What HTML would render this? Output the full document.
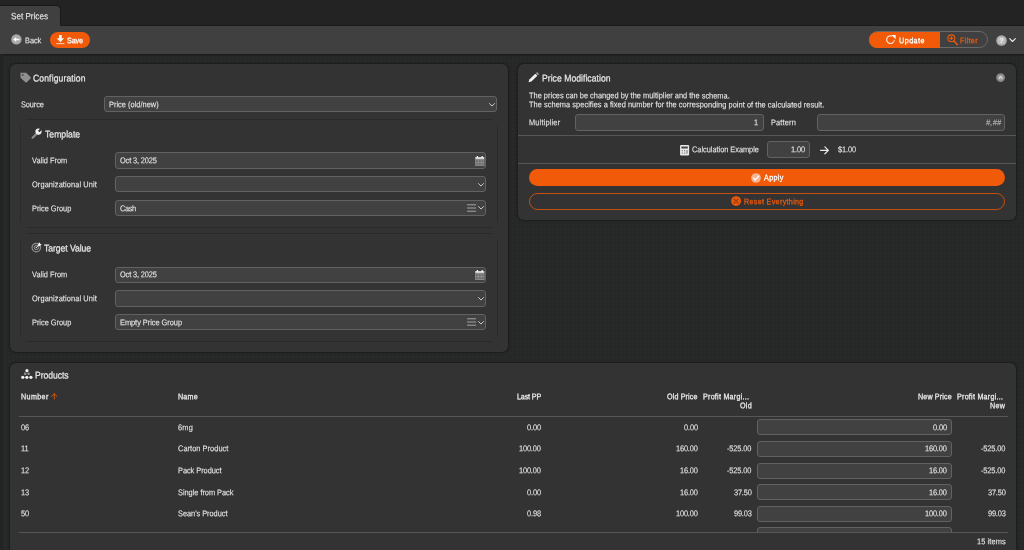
<!DOCTYPE html>
<html><head><meta charset="utf-8"><title>Set Prices</title>
<style>
html,body{margin:0;padding:0;background:#262727;font-family:"Liberation Sans",sans-serif;}
body{width:1024px;height:550px;overflow:hidden;font-family:"Liberation Sans",sans-serif;}
#root{filter:blur(0.3px);position:relative;width:1024px;height:550px;overflow:hidden;background-color:#262828;background-image:radial-gradient(circle at 1px 1px,#2c2e2e 0.5px,rgba(44,46,46,0) 0.85px);background-size:4px 4px;}
#root *{box-sizing:border-box;}
.a{position:absolute;}
.t{transform:scaleY(1.13) rotate(0.03deg);text-rendering:geometricPrecision;position:absolute;white-space:pre;line-height:12px;height:12px;font-family:"Liberation Sans",sans-serif;}
.topbar{left:0;top:0;width:1024px;height:26px;background:#232323;}
.tab{left:-1px;top:5.4px;width:61.8px;height:21px;background:#404040;border:1px solid #191919;border-bottom:none;border-radius:0 5px 0 0;}
.toolbar{left:0;top:26px;width:1024px;height:27.5px;background:#404040;box-shadow:0 1px 2px rgba(0,0,0,.45);}
.panel{background:#333333;border-radius:6px;box-shadow:0 0 2px 1px rgba(0,0,0,.35);}
.inp{background:#414141;border:1px solid #626262;border-radius:3px;}
.hl{height:1px;background:#2a2a2a;}
.vl{width:1px;background:#2a2a2a;}
.ll{height:1px;background:#565656;}
.pill{border-radius:9px;}
svg{position:absolute;overflow:visible;}

</style></head>
<body>
<div id="root">
<div class="a topbar"></div>
<div class="a tab"></div>
<div class="a toolbar"></div>
<div class="a" style="left:60px;top:25.3px;width:964px;height:1px;background:#1b1b1b;"></div>

<div class="a leftstrip" style="left:0;top:54px;width:2.5px;height:496px;background:#222323;"></div>
<!-- toolbar buttons -->
<div class="a pill" style="left:49.7px;top:31.5px;width:40px;height:16.5px;background:#f05a08;"></div>
<div class="a" style="left:868.8px;top:31.4px;width:119px;height:16.700px;border-radius:9px;border:1px solid #6a6a6a;"></div>
<div class="a" style="left:868.8px;top:31.700px;width:71.2px;height:16.400px;border-radius:9px 0 0 9px;background:#f05a08;"></div>

<!-- panels -->
<div class="a panel" style="left:10px;top:63.5px;width:498px;height:288.4px;"></div>
<div class="a panel" style="left:518px;top:63.5px;width:498px;height:156.4px;"></div>
<div class="a panel" style="left:10px;top:362.7px;width:1006px;height:200px;"></div>

<!-- left panel lines -->
<div class="a hl" style="left:26px;top:119px;width:466px;"></div>
<div class="a hl" style="left:26px;top:227px;width:466px;"></div>
<div class="a hl" style="left:26px;top:233px;width:466px;"></div>
<div class="a hl" style="left:26px;top:341px;width:466px;"></div>
<div class="a vl" style="left:20px;top:125.5px;height:96px;"></div>
<div class="a vl" style="left:497px;top:125.5px;height:96px;"></div>
<div class="a vl" style="left:20px;top:239.5px;height:96.5px;"></div>
<div class="a vl" style="left:497px;top:239.5px;height:96.5px;"></div>

<!-- left panel inputs -->
<div class="a inp" style="left:104.2px;top:96.2px;width:392.8px;height:16.3px;"></div>
<div class="a inp" style="left:115.2px;top:152.4px;width:370.9px;height:16.2px;"></div>
<div class="a inp" style="left:115.2px;top:176.3px;width:370.9px;height:16.2px;"></div>
<div class="a inp" style="left:115.2px;top:200.1px;width:370.9px;height:16.2px;"></div>
<div class="a inp" style="left:115.2px;top:266.5px;width:370.9px;height:16.2px;"></div>
<div class="a inp" style="left:115.2px;top:290.4px;width:370.9px;height:16.2px;"></div>
<div class="a inp" style="left:115.2px;top:314.2px;width:370.9px;height:16.2px;"></div>

<!-- right panel -->
<div class="a inp" style="left:575.1px;top:114.2px;width:188.5px;height:16.6px;"></div>
<div class="a inp" style="left:816.9px;top:114.2px;width:188.6px;height:16.6px;"></div>
<div class="a ll" style="left:518px;top:135.4px;width:498px;"></div>
<div class="a ll" style="left:518px;top:162.6px;width:498px;"></div>
<div class="a inp" style="left:767px;top:141.4px;width:43.4px;height:16.9px;"></div>
<div class="a pill" style="left:529.3px;top:169.2px;width:476.1px;height:16.4px;background:#f05a08;"></div>
<div class="a pill" style="left:529.3px;top:193.3px;width:476.1px;height:16.6px;border:1px solid #c55011;"></div>

<!-- products lines & inputs -->
<div class="a ll" style="left:18.5px;top:415.9px;width:989px;"></div>
<div class="a" style="left:18.5px;top:417px;width:989px;height:115.3px;overflow:hidden;">
  <div class="a inp" style="left:738.8px;top:2.2px;width:194.9px;height:16.3px;"></div>
  <div class="a inp" style="left:738.8px;top:23.85px;width:194.9px;height:16.3px;"></div>
  <div class="a inp" style="left:738.8px;top:45.5px;width:194.9px;height:16.3px;"></div>
  <div class="a inp" style="left:738.8px;top:67.15px;width:194.9px;height:16.3px;"></div>
  <div class="a inp" style="left:738.8px;top:88.8px;width:194.9px;height:16.3px;"></div>
  <div class="a inp" style="left:738.8px;top:110.45px;width:194.9px;height:16.3px;"></div>
</div>
<div class="a ll" style="left:18.5px;top:532.2px;width:989px;"></div>

<!-- ===== icons ===== -->
<!-- back -->
<svg style="left:10.8px;top:34.2px" width="10.8" height="10.8" viewBox="0 0 20 20"><circle cx="10" cy="10" r="9.6" fill="#a9a9a9"/><path d="M15.5 8.6H9.6V5.4L4 10l5.6 4.6v-3.2h5.9z" fill="#fff"/></svg>
<!-- save -->
<svg style="left:55.6px;top:34.8px" width="8.800" height="9.600" viewBox="0 0 18 20"><path d="M6.200 0h5.600v6.800h5L9 15 1.200 6.800h5z" fill="#f4f8fb"/><rect x="0.500" y="17.200" width="17" height="1.800" fill="#fff" opacity=".85"/></svg>
<!-- update -->
<svg style="left:885.4px;top:34.4px" width="11" height="11" viewBox="0 0 22 22"><path d="M13.2 4.1A7.6 7.6 0 1 0 18.4 13" fill="none" stroke="#fff" stroke-width="2.300" stroke-linecap="round" opacity=".85"/><path d="M13 2.2h8.2v8.2z" fill="#fff"/></svg>
<!-- filter -->
<svg style="left:947.2px;top:34px" width="11.2" height="11.6" viewBox="0 0 22 23"><circle cx="8.6" cy="8.6" r="6.9" fill="none" stroke="#e8590c" stroke-width="2.2"/><path d="M8.6 4.8v7.6M4.8 8.6h7.6" stroke="#e8590c" stroke-width="2.2"/><path d="M13.6 13.8l7 7.4" stroke="#e8590c" stroke-width="3.2" stroke-linecap="round"/></svg>
<!-- help -->
<svg style="left:995.8px;top:34.500px" width="11" height="11" viewBox="0 0 22 22"><circle cx="11" cy="11" r="10.600" fill="#ababab"/><circle cx="11" cy="11" r="7.600" fill="#bdbdbd"/><text x="11" y="16.400" font-family="Liberation Sans, sans-serif" font-weight="700" font-size="14.500" text-anchor="middle" fill="#f6f6f6">?</text></svg>
<svg style="left:1009.4px;top:37.6px" width="7" height="4.4" viewBox="0 0 14 9"><path d="M1.2 1.4L7 7.2l5.8-5.8" fill="none" stroke="#eaeaea" stroke-width="2.3" stroke-linecap="round" stroke-linejoin="round"/></svg>

<!-- tags (Configuration) -->
<svg style="left:20.4px;top:71.6px" width="11" height="11" viewBox="0 0 22 22"><path d="M1 1.6h10.2c.9 0 1.6.3 2.2.9l7.6 7.6c.8.8.8 2 0 2.8l-7.4 7.4c-.8.8-2 .8-2.800 0L2 12.600C1.400 12 1 11.300 1 10.400z" fill="#8f8f8f"/><circle cx="5.600" cy="6" r="1.700" fill="#333"/></svg>
<!-- wrench (Template) -->
<svg style="left:31.4px;top:127.6px" width="11" height="11" viewBox="0 0 22 22"><path d="M3.2 19.400L11.400 11.200" stroke="#8c8c8c" stroke-width="4.400" stroke-linecap="round"/><circle cx="15" cy="7.200" r="6.200" fill="#f2f2f2"/><path d="M14 5.400L20.700 -1.300l3 3L17 8.400z" fill="#333"/></svg>
<!-- target (Target Value) -->
<svg style="left:31.2px;top:242.4px" width="11" height="11" viewBox="0 0 22 22"><circle cx="10.600" cy="11" r="8.500" fill="none" stroke="#8e8e8e" stroke-width="2.500"/><circle cx="10.600" cy="11" r="4.300" fill="none" stroke="#9a9a9a" stroke-width="2"/><circle cx="10.600" cy="11" r="1.500" fill="#d8d8d8"/><path d="M10.800 10.800L15.600 6" stroke="#f2f2f2" stroke-width="1.800"/><path d="M13.600 5.200l4.200-4.600.6 3.200 3.200.6-4.600 4.200-2.800-.600z" fill="#f6f6f6"/></svg>

<!-- chevrons & field icons : source -->
<svg style="left:488.6px;top:102.5px" width="6" height="3.600" viewBox="0 0 12 7"><path d="M1 1l5 5 5-5" fill="none" stroke="#d2d2d2" stroke-width="1.900" stroke-linecap="round" stroke-linejoin="round"/></svg>
<!-- fieldset icons dy=0 -->
<svg style="left:474.6px;top:155.9px" width="9.6" height="10" viewBox="0 0 19 20"><rect x="0.5" y="2" width="18" height="5" fill="#d2d2d2"/><rect x="3.4" y="0" width="2.6" height="4" fill="#f4f4f4"/><rect x="13" y="0" width="2.600" height="4" fill="#f4f4f4"/><rect x="0.5" y="7" width="18" height="12.500" fill="#6b6b6b"/><path d="M0.5 7.500h18M0.500 13.200h18M0.500 19h18M1 7v12.500M6.600 7v12.500M12.400 7v12.500M18 7v12.500" stroke="#9c9c9c" stroke-width="1.200" fill="none"/></svg>
<svg style="left:478px;top:182.6px" width="6" height="3.600" viewBox="0 0 12 7"><path d="M1 1l5 5 5-5" fill="none" stroke="#d2d2d2" stroke-width="1.900" stroke-linecap="round" stroke-linejoin="round"/></svg>
<svg style="left:466.8px;top:203.500px" width="9.200" height="8" viewBox="0 0 18 16"><path d="M0 1.600h18M0 8h18M0 14.400h18" stroke="#c6c6c6" stroke-width="1.500" fill="none"/></svg>
<svg style="left:478px;top:206.4px" width="6" height="3.600" viewBox="0 0 12 7"><path d="M1 1l5 5 5-5" fill="none" stroke="#d2d2d2" stroke-width="1.900" stroke-linecap="round" stroke-linejoin="round"/></svg>
<!-- fieldset icons dy=114.1 -->
<svg style="left:474.6px;top:270.0px" width="9.6" height="10" viewBox="0 0 19 20"><rect x="0.5" y="2" width="18" height="5" fill="#d2d2d2"/><rect x="3.4" y="0" width="2.6" height="4" fill="#f4f4f4"/><rect x="13" y="0" width="2.600" height="4" fill="#f4f4f4"/><rect x="0.5" y="7" width="18" height="12.500" fill="#6b6b6b"/><path d="M0.5 7.500h18M0.500 13.200h18M0.500 19h18M1 7v12.500M6.600 7v12.500M12.400 7v12.500M18 7v12.500" stroke="#9c9c9c" stroke-width="1.200" fill="none"/></svg>
<svg style="left:478px;top:296.7px" width="6" height="3.600" viewBox="0 0 12 7"><path d="M1 1l5 5 5-5" fill="none" stroke="#d2d2d2" stroke-width="1.900" stroke-linecap="round" stroke-linejoin="round"/></svg>
<svg style="left:466.8px;top:317.600px" width="9.200" height="8" viewBox="0 0 18 16"><path d="M0 1.600h18M0 8h18M0 14.400h18" stroke="#c6c6c6" stroke-width="1.500" fill="none"/></svg>
<svg style="left:478px;top:320.5px" width="6" height="3.600" viewBox="0 0 12 7"><path d="M1 1l5 5 5-5" fill="none" stroke="#d2d2d2" stroke-width="1.900" stroke-linecap="round" stroke-linejoin="round"/></svg>

<!-- pencil (Price Modification) -->
<svg style="left:528.4px;top:72px" width="11.400" height="10.800" viewBox="0 0 23 22"><path d="M1 21l1.600-5.800L14.800 3.400l4.200 4.200L6.800 19.400z" fill="#f0f0f0"/><path d="M15.800 2.400l1.600-1.600c.6-.6 1.500-.6 2.100 0l2.100 2.100c.6.600.600 1.500 0 2.100L20 6.600z" fill="#9c9c9c"/></svg>
<!-- collapse -->
<svg style="left:996px;top:72.700px" width="9.200" height="9.200" viewBox="0 0 20 20"><circle cx="10" cy="10" r="9.700" fill="#858585"/><circle cx="10" cy="10" r="6.400" fill="#9d9d9d"/><path d="M6.600 11.400l3.400-3.400 3.400 3.400" fill="none" stroke="#ececec" stroke-width="2.200" stroke-linecap="round" stroke-linejoin="round"/></svg>
<!-- calculator -->
<svg style="left:680.4px;top:144.600px" width="9.200" height="10.600" viewBox="0 0 18 21"><rect x="0" y="0" width="18" height="21" rx="2" fill="#e9e9e9"/><rect x="2.600" y="3" width="12.800" height="4" fill="#4a4a4a"/><rect x="3.200" y="10.200" width="2.200" height="2.200" fill="#777"/><rect x="7.900" y="10.200" width="2.200" height="2.200" fill="#777"/><rect x="3.200" y="15" width="2.200" height="2.200" fill="#777"/><rect x="7.900" y="15" width="2.200" height="2.200" fill="#777"/><rect x="12.600" y="10.200" width="2.200" height="7" fill="#777"/></svg>
<!-- arrow -->
<svg style="left:819.800px;top:146px" width="9.200" height="8.600" viewBox="0 0 18 17"><path d="M1 8.500h15M9.600 1.600l6.900 6.900-6.900 6.900" fill="none" stroke="#ececec" stroke-width="2.300" stroke-linecap="round" stroke-linejoin="round"/></svg>
<!-- apply check -->
<svg style="left:750.800px;top:172.800px" width="10" height="10" viewBox="0 0 20 20"><circle cx="10" cy="10" r="9.700" fill="#f9b48f"/><path d="M5 10.200l3.600 3.600 6.600-7.200" fill="none" stroke="#fff" stroke-width="2.700" stroke-linecap="round" stroke-linejoin="round"/></svg>
<!-- reset -->
<svg style="left:731.400px;top:196.400px" width="10.200" height="10.200" viewBox="0 0 20 20"><circle cx="10" cy="10" r="9.700" fill="#e8590c"/><path d="M6.300 6.300l7.400 7.400M13.700 6.300l-7.400 7.400" stroke="#a23c08" stroke-width="2.600" stroke-linecap="round"/></svg>
<!-- products icon -->
<svg style="left:20.800px;top:369.200px" width="11.600" height="10.400" viewBox="0 0 23 21"><circle cx="11.800" cy="3.400" r="3.200" fill="#f2f2f2"/><circle cx="8.200" cy="9.800" r="2.500" fill="#9a9a9a"/><circle cx="15.200" cy="9.800" r="2.500" fill="#9a9a9a"/><circle cx="3.400" cy="16.800" r="3.300" fill="#f2f2f2"/><circle cx="11.600" cy="16.800" r="3.300" fill="#f2f2f2"/><circle cx="19.800" cy="16.800" r="3.300" fill="#f2f2f2"/></svg>
<!-- sort arrow -->
<svg style="left:50.800px;top:393.400px" width="6.600" height="6.400" viewBox="0 0 13 13"><path d="M6.500 12.500V1.600M1.200 6.600l5.300-5.200 5.300 5.200" fill="none" stroke="#d9560f" stroke-width="2" stroke-linecap="round" stroke-linejoin="round"/></svg>

<span class="t" style="top:11.19px;font-size:8.10px;color:#ececec;transform-origin:0 5.89px;letter-spacing:0.009px;-webkit-text-stroke:0.1px #ececec;left:10.70px;">Set Prices</span>
<span class="t" style="top:34.64px;font-size:7.40px;color:#e8e8e8;transform-origin:0 5.90px;letter-spacing:-0.038px;-webkit-text-stroke:0.1px #e8e8e8;left:24.50px;">Back</span>
<span class="t" style="top:34.72px;font-size:7.15px;color:#ffffff;transform-origin:0 5.90px;letter-spacing:-0.099px;-webkit-text-stroke:0.27px #ffffff;left:66.60px;">Save</span>
<span class="t" style="top:34.92px;font-size:7.15px;color:#ffffff;transform-origin:0 5.90px;letter-spacing:0.507px;-webkit-text-stroke:0.27px #ffffff;left:898.60px;">Update</span>
<span class="t" style="top:34.92px;font-size:7.15px;color:#e8590c;transform-origin:0 5.90px;letter-spacing:0.335px;-webkit-text-stroke:0.27px #e8590c;left:960.30px;">Filter</span>
<span class="t" style="top:72.22px;font-size:8.60px;color:#eaeaea;transform-origin:0 5.88px;letter-spacing:0.119px;-webkit-text-stroke:0.2px #eaeaea;left:33.30px;">Configuration</span>
<span class="t" style="top:98.54px;font-size:7.40px;color:#e6e6e6;transform-origin:0 5.90px;letter-spacing:-0.108px;-webkit-text-stroke:0.1px #e6e6e6;left:20.90px;">Source</span>
<span class="t" style="top:98.54px;font-size:7.40px;color:#e6e6e6;transform-origin:0 5.90px;letter-spacing:0.023px;-webkit-text-stroke:0.1px #e6e6e6;left:109.20px;">Price (old/new)</span>
<span class="t" style="top:128.02px;font-size:8.60px;color:#eaeaea;transform-origin:0 5.88px;letter-spacing:0.038px;-webkit-text-stroke:0.2px #eaeaea;left:44.60px;">Template</span>
<span class="t" style="top:155.14px;font-size:7.40px;color:#e6e6e6;transform-origin:0 5.90px;letter-spacing:0.007px;-webkit-text-stroke:0.1px #e6e6e6;left:31.70px;">Valid From</span>
<span class="t" style="top:155.14px;font-size:7.40px;color:#e6e6e6;transform-origin:0 5.90px;letter-spacing:-0.133px;-webkit-text-stroke:0.1px #e6e6e6;left:119.80px;">Oct 3, 2025</span>
<span class="t" style="top:178.94px;font-size:7.40px;color:#e6e6e6;transform-origin:0 5.90px;letter-spacing:0.109px;-webkit-text-stroke:0.1px #e6e6e6;left:31.70px;">Organizational Unit</span>
<span class="t" style="top:202.74px;font-size:7.40px;color:#e6e6e6;transform-origin:0 5.90px;letter-spacing:-0.017px;-webkit-text-stroke:0.1px #e6e6e6;left:31.70px;">Price Group</span>
<span class="t" style="top:202.74px;font-size:7.40px;color:#e6e6e6;transform-origin:0 5.90px;letter-spacing:-0.369px;-webkit-text-stroke:0.1px #e6e6e6;left:120.00px;">Cash</span>
<span class="t" style="top:242.02px;font-size:8.60px;color:#eaeaea;transform-origin:0 5.88px;letter-spacing:-0.046px;-webkit-text-stroke:0.2px #eaeaea;left:44.20px;">Target Value</span>
<span class="t" style="top:269.14px;font-size:7.40px;color:#e6e6e6;transform-origin:0 5.90px;letter-spacing:0.007px;-webkit-text-stroke:0.1px #e6e6e6;left:31.70px;">Valid From</span>
<span class="t" style="top:269.14px;font-size:7.40px;color:#e6e6e6;transform-origin:0 5.90px;letter-spacing:-0.133px;-webkit-text-stroke:0.1px #e6e6e6;left:119.80px;">Oct 3, 2025</span>
<span class="t" style="top:292.94px;font-size:7.40px;color:#e6e6e6;transform-origin:0 5.90px;letter-spacing:0.109px;-webkit-text-stroke:0.1px #e6e6e6;left:31.70px;">Organizational Unit</span>
<span class="t" style="top:316.74px;font-size:7.40px;color:#e6e6e6;transform-origin:0 5.90px;letter-spacing:-0.017px;-webkit-text-stroke:0.1px #e6e6e6;left:31.70px;">Price Group</span>
<span class="t" style="top:316.74px;font-size:7.40px;color:#e6e6e6;transform-origin:0 5.90px;letter-spacing:-0.024px;-webkit-text-stroke:0.1px #e6e6e6;left:120.00px;">Empty Price Group</span>
<span class="t" style="top:72.22px;font-size:8.60px;color:#eaeaea;transform-origin:0 5.88px;letter-spacing:0.040px;-webkit-text-stroke:0.2px #eaeaea;left:541.70px;">Price Modification</span>
<span class="t" style="top:89.64px;font-size:7.40px;color:#e6e6e6;transform-origin:0 5.90px;letter-spacing:0.018px;-webkit-text-stroke:0.1px #e6e6e6;left:529.40px;">The prices can be changed by the multiplier and the schema.</span>
<span class="t" style="top:98.54px;font-size:7.40px;color:#e6e6e6;transform-origin:0 5.90px;letter-spacing:0.054px;-webkit-text-stroke:0.1px #e6e6e6;left:529.40px;">The schema specifies a fixed number for the corresponding point of the calculated result.</span>
<span class="t" style="top:116.54px;font-size:7.40px;color:#e6e6e6;transform-origin:0 5.90px;letter-spacing:0.169px;-webkit-text-stroke:0.1px #e6e6e6;left:529.40px;">Multiplier</span>
<span class="t" style="top:116.54px;font-size:7.40px;color:#e6e6e6;transform-origin:0 5.90px;-webkit-text-stroke:0.1px #e6e6e6;right:265.40px;">1</span>
<span class="t" style="top:116.54px;font-size:7.40px;color:#e6e6e6;transform-origin:0 5.90px;letter-spacing:0.163px;-webkit-text-stroke:0.1px #e6e6e6;left:770.80px;">Pattern</span>
<span class="t" style="top:116.54px;font-size:7.40px;color:#bdbdbd;transform-origin:0 5.90px;letter-spacing:0.249px;-webkit-text-stroke:0.1px #bdbdbd;font-style:italic;right:22.95px;">#,##</span>
<span class="t" style="top:144.44px;font-size:7.40px;color:#e6e6e6;transform-origin:0 5.90px;letter-spacing:-0.024px;-webkit-text-stroke:0.1px #e6e6e6;left:691.70px;">Calculation Example</span>
<span class="t" style="top:144.44px;font-size:7.40px;color:#e6e6e6;transform-origin:0 5.90px;letter-spacing:-0.051px;-webkit-text-stroke:0.1px #e6e6e6;right:219.05px;">1.00</span>
<span class="t" style="top:144.44px;font-size:7.40px;color:#e6e6e6;transform-origin:0 5.90px;letter-spacing:-0.104px;-webkit-text-stroke:0.1px #e6e6e6;left:838.45px;">$1.00</span>
<span class="t" style="top:172.32px;font-size:7.15px;color:#ffffff;transform-origin:0 5.90px;letter-spacing:0.373px;-webkit-text-stroke:0.27px #ffffff;left:763.95px;">Apply</span>
<span class="t" style="top:196.22px;font-size:7.15px;color:#e8590c;transform-origin:0 5.90px;letter-spacing:0.331px;-webkit-text-stroke:0.27px #e8590c;left:744.20px;">Reset Everything</span>
<span class="t" style="top:369.22px;font-size:8.60px;color:#eaeaea;transform-origin:0 5.88px;letter-spacing:-0.055px;-webkit-text-stroke:0.2px #eaeaea;left:34.90px;">Products</span>
<span class="t" style="top:391.32px;font-size:7.15px;color:#eaeaea;transform-origin:0 5.90px;letter-spacing:0.378px;-webkit-text-stroke:0.27px #eaeaea;left:20.80px;">Number</span>
<span class="t" style="top:391.32px;font-size:7.15px;color:#eaeaea;transform-origin:0 5.90px;letter-spacing:0.207px;-webkit-text-stroke:0.27px #eaeaea;left:178.00px;">Name</span>
<span class="t" style="top:391.32px;font-size:7.15px;color:#eaeaea;transform-origin:0 5.90px;letter-spacing:-0.134px;-webkit-text-stroke:0.27px #eaeaea;right:483.33px;">Last PP</span>
<span class="t" style="top:391.32px;font-size:7.15px;color:#eaeaea;transform-origin:0 5.90px;letter-spacing:0.133px;-webkit-text-stroke:0.27px #eaeaea;right:325.97px;">Old Price</span>
<span class="t" style="top:391.32px;font-size:7.15px;color:#eaeaea;transform-origin:0 5.90px;letter-spacing:0.252px;-webkit-text-stroke:0.27px #eaeaea;left:702.70px;">Profit Margi...</span>
<span class="t" style="top:400.12px;font-size:7.15px;color:#eaeaea;transform-origin:0 5.90px;letter-spacing:0.258px;-webkit-text-stroke:0.27px #eaeaea;right:272.34px;">Old</span>
<span class="t" style="top:391.32px;font-size:7.15px;color:#eaeaea;transform-origin:0 5.90px;letter-spacing:0.135px;-webkit-text-stroke:0.27px #eaeaea;right:71.86px;">New Price</span>
<span class="t" style="top:391.32px;font-size:7.15px;color:#eaeaea;transform-origin:0 5.90px;letter-spacing:0.252px;-webkit-text-stroke:0.27px #eaeaea;left:956.80px;">Profit Margi...</span>
<span class="t" style="top:400.12px;font-size:7.15px;color:#eaeaea;transform-origin:0 5.90px;letter-spacing:0.265px;-webkit-text-stroke:0.27px #eaeaea;right:18.73px;">New</span>
<span class="t" style="top:421.74px;font-size:7.40px;color:#e6e6e6;transform-origin:0 5.90px;letter-spacing:-0.016px;-webkit-text-stroke:0.1px #e6e6e6;left:20.80px;">06</span>
<span class="t" style="top:421.74px;font-size:7.40px;color:#e6e6e6;transform-origin:0 5.90px;letter-spacing:0.202px;-webkit-text-stroke:0.1px #e6e6e6;left:178.00px;">6mg</span>
<span class="t" style="top:421.74px;font-size:7.40px;color:#e6e6e6;transform-origin:0 5.90px;letter-spacing:-0.101px;-webkit-text-stroke:0.1px #e6e6e6;right:483.30px;">0.00</span>
<span class="t" style="top:421.74px;font-size:7.40px;color:#e6e6e6;transform-origin:0 5.90px;letter-spacing:-0.101px;-webkit-text-stroke:0.1px #e6e6e6;right:326.20px;">0.00</span>
<span class="t" style="top:421.74px;font-size:7.40px;color:#e6e6e6;transform-origin:0 5.90px;letter-spacing:-0.101px;-webkit-text-stroke:0.1px #e6e6e6;right:77.30px;">0.00</span>
<span class="t" style="top:443.39px;font-size:7.40px;color:#e6e6e6;transform-origin:0 5.90px;letter-spacing:-0.141px;-webkit-text-stroke:0.1px #e6e6e6;left:20.80px;">11</span>
<span class="t" style="top:443.39px;font-size:7.40px;color:#e6e6e6;transform-origin:0 5.90px;letter-spacing:0.052px;-webkit-text-stroke:0.1px #e6e6e6;left:178.00px;">Carton Product</span>
<span class="t" style="top:443.39px;font-size:7.40px;color:#e6e6e6;transform-origin:0 5.90px;letter-spacing:-0.172px;-webkit-text-stroke:0.1px #e6e6e6;right:483.37px;">100.00</span>
<span class="t" style="top:443.39px;font-size:7.40px;color:#e6e6e6;transform-origin:0 5.90px;letter-spacing:-0.172px;-webkit-text-stroke:0.1px #e6e6e6;right:326.27px;">160.00</span>
<span class="t" style="top:443.39px;font-size:7.40px;color:#e6e6e6;transform-origin:0 5.90px;letter-spacing:-0.128px;-webkit-text-stroke:0.1px #e6e6e6;right:272.73px;">-525.00</span>
<span class="t" style="top:443.39px;font-size:7.40px;color:#e6e6e6;transform-origin:0 5.90px;letter-spacing:-0.172px;-webkit-text-stroke:0.1px #e6e6e6;right:77.37px;">160.00</span>
<span class="t" style="top:443.39px;font-size:7.40px;color:#e6e6e6;transform-origin:0 5.90px;letter-spacing:-0.128px;-webkit-text-stroke:0.1px #e6e6e6;right:18.63px;">-525.00</span>
<span class="t" style="top:465.04px;font-size:7.40px;color:#e6e6e6;transform-origin:0 5.90px;letter-spacing:-0.116px;-webkit-text-stroke:0.1px #e6e6e6;left:20.80px;">12</span>
<span class="t" style="top:465.04px;font-size:7.40px;color:#e6e6e6;transform-origin:0 5.90px;letter-spacing:-0.043px;-webkit-text-stroke:0.1px #e6e6e6;left:178.00px;">Pack Product</span>
<span class="t" style="top:465.04px;font-size:7.40px;color:#e6e6e6;transform-origin:0 5.90px;letter-spacing:-0.172px;-webkit-text-stroke:0.1px #e6e6e6;right:483.37px;">100.00</span>
<span class="t" style="top:465.04px;font-size:7.40px;color:#e6e6e6;transform-origin:0 5.90px;letter-spacing:-0.144px;-webkit-text-stroke:0.1px #e6e6e6;right:326.24px;">16.00</span>
<span class="t" style="top:465.04px;font-size:7.40px;color:#e6e6e6;transform-origin:0 5.90px;letter-spacing:-0.128px;-webkit-text-stroke:0.1px #e6e6e6;right:272.73px;">-525.00</span>
<span class="t" style="top:465.04px;font-size:7.40px;color:#e6e6e6;transform-origin:0 5.90px;letter-spacing:-0.144px;-webkit-text-stroke:0.1px #e6e6e6;right:77.34px;">16.00</span>
<span class="t" style="top:465.04px;font-size:7.40px;color:#e6e6e6;transform-origin:0 5.90px;letter-spacing:-0.128px;-webkit-text-stroke:0.1px #e6e6e6;right:18.63px;">-525.00</span>
<span class="t" style="top:486.69px;font-size:7.40px;color:#e6e6e6;transform-origin:0 5.90px;letter-spacing:-0.116px;-webkit-text-stroke:0.1px #e6e6e6;left:20.80px;">13</span>
<span class="t" style="top:486.69px;font-size:7.40px;color:#e6e6e6;transform-origin:0 5.90px;letter-spacing:-0.027px;-webkit-text-stroke:0.1px #e6e6e6;left:178.00px;">Single from Pack</span>
<span class="t" style="top:486.69px;font-size:7.40px;color:#e6e6e6;transform-origin:0 5.90px;letter-spacing:-0.101px;-webkit-text-stroke:0.1px #e6e6e6;right:483.30px;">0.00</span>
<span class="t" style="top:486.69px;font-size:7.40px;color:#e6e6e6;transform-origin:0 5.90px;letter-spacing:-0.144px;-webkit-text-stroke:0.1px #e6e6e6;right:326.24px;">16.00</span>
<span class="t" style="top:486.69px;font-size:7.40px;color:#e6e6e6;transform-origin:0 5.90px;letter-spacing:-0.184px;-webkit-text-stroke:0.1px #e6e6e6;right:272.78px;">37.50</span>
<span class="t" style="top:486.69px;font-size:7.40px;color:#e6e6e6;transform-origin:0 5.90px;letter-spacing:-0.144px;-webkit-text-stroke:0.1px #e6e6e6;right:77.34px;">16.00</span>
<span class="t" style="top:486.69px;font-size:7.40px;color:#e6e6e6;transform-origin:0 5.90px;letter-spacing:-0.184px;-webkit-text-stroke:0.1px #e6e6e6;right:18.68px;">37.50</span>
<span class="t" style="top:508.34px;font-size:7.40px;color:#e6e6e6;transform-origin:0 5.90px;letter-spacing:-0.016px;-webkit-text-stroke:0.1px #e6e6e6;left:20.80px;">50</span>
<span class="t" style="top:508.34px;font-size:7.40px;color:#e6e6e6;transform-origin:0 5.90px;letter-spacing:-0.032px;-webkit-text-stroke:0.1px #e6e6e6;left:178.00px;">Sean's Product</span>
<span class="t" style="top:508.34px;font-size:7.40px;color:#e6e6e6;transform-origin:0 5.90px;letter-spacing:-0.101px;-webkit-text-stroke:0.1px #e6e6e6;right:483.30px;">0.98</span>
<span class="t" style="top:508.34px;font-size:7.40px;color:#e6e6e6;transform-origin:0 5.90px;letter-spacing:-0.172px;-webkit-text-stroke:0.1px #e6e6e6;right:326.27px;">100.00</span>
<span class="t" style="top:508.34px;font-size:7.40px;color:#e6e6e6;transform-origin:0 5.90px;letter-spacing:-0.184px;-webkit-text-stroke:0.1px #e6e6e6;right:272.78px;">99.03</span>
<span class="t" style="top:508.34px;font-size:7.40px;color:#e6e6e6;transform-origin:0 5.90px;letter-spacing:-0.172px;-webkit-text-stroke:0.1px #e6e6e6;right:77.37px;">100.00</span>
<span class="t" style="top:508.34px;font-size:7.40px;color:#e6e6e6;transform-origin:0 5.90px;letter-spacing:-0.184px;-webkit-text-stroke:0.1px #e6e6e6;right:18.68px;">99.03</span>
<span class="t" style="top:535.64px;font-size:7.40px;color:#e6e6e6;transform-origin:0 5.90px;letter-spacing:0.104px;-webkit-text-stroke:0.1px #e6e6e6;right:18.10px;">15 items</span>
</div>
</body></html>
